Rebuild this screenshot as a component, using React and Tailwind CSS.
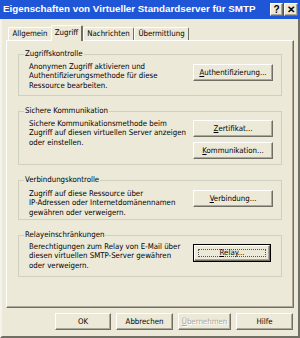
const btn =
  'flex items-center justify-center whitespace-nowrap bg-[#ece9d8] border border-t-white border-l-white border-r-[#716f64] border-b-[#716f64] shadow-[inset_-1px_-1px_#aca899]';

function Button({ children, className = '', isDefault = false, disabled = false }) {
  if (isDefault) {
    return (
      <div className={`shrink-0 border border-black ${className}`}>
        <div className={`${btn} w-full h-full`}>
          <div className="w-[calc(100%-6px)] h-[calc(100%-6px)] border border-dotted border-[#555] flex items-center justify-center">
            {children}
          </div>
        </div>
      </div>
    );
  }
  return (
    <div className={`${btn} shrink-0 ${className} ${disabled ? 'text-[#aca899] [text-shadow:1px_1px_white]' : ''}`}>
      {children}
    </div>
  );
}

function Group({ title, children, className = '' }) {
  return (
    <fieldset className={`border border-[#d0d0bf] px-0 ${className}`}>
      <legend className="ml-[5px] px-[1px] leading-[10px]">{title}</legend>
      {children}
    </fieldset>
  );
}

function Tab({ label, active = false, className = '' }) {
  return active ? (
    <div className={`relative z-10 -mb-px h-[16px] pt-[1px] text-center whitespace-nowrap bg-[#ece9d8] border-t border-l border-white border-r-2 border-r-[#716f64] rounded-t-[2px] ${className}`}>
      {label}
    </div>
  ) : (
    <div className={`mt-[2px] h-[13px] text-center whitespace-nowrap bg-[#ece9d8] border-t border-l border-white border-r border-r-[#716f64] rounded-t-[2px] ${className}`}>
      {label}
    </div>
  );
}

export default function App() {
  return (
    <div
      className="w-[300px] h-[338px] bg-[#ece9d8] text-black text-[7.8px] flex flex-col border-l-2 border-l-[#f4f3ee] border-r-2 border-r-[#716f64] border-b-2 border-b-[#716f64]"
      style={{ fontFamily: '"DejaVu Sans Condensed", "DejaVu Sans", sans-serif' }}
    >
      <div className="h-[19px] -ml-[2px] -mr-[2px] bg-[#1f56d8] flex items-center pl-[3px] pr-[2px]">
        <span className="text-white font-bold text-[9.8px] flex-1 whitespace-nowrap font-['Liberation_Sans',Arial,sans-serif]">
          Eigenschaften von Virtueller Standardserver für SMTP
        </span>
        <div className={`${btn} w-[13px] h-[13px] font-bold text-[10px] font-['Liberation_Sans',Arial,sans-serif]`}>?</div>
        <div className={`${btn} w-[14px] h-[13px] ml-[1px] font-bold text-[10px] font-['Liberation_Sans',Arial,sans-serif]`}>✕</div>
      </div>

      <div className="flex items-end pl-[6px] mt-[6px] h-[15px] text-[7.8px]">
        <Tab label="Allgemein" className="w-[44px]" />
        <Tab label="Zugriff" active className="w-[32px] -ml-[1px]" />
        <Tab label="Nachrichten" className="w-[51px]" />
        <Tab label="Übermittlung" className="w-[55px]" />
      </div>

      <div className="ml-[4px] w-[288px] h-[268px] border border-t-white border-l-white border-r-[#716f64] border-b-[#716f64] shadow-[inset_-1px_-1px_#aca899] px-[11px] pt-[8px] flex flex-col gap-[10px]">
        <Group title="Zugriffskontrolle" className="h-[47px]">
          <div className="flex justify-between pl-[10px] pr-[8px] leading-[9.3px]">
            <p className="mt-[3px] whitespace-nowrap">
              Anonymen Zugriff aktivieren und
              <br />
              Authentifizierungsmethode für diese
              <br />
              Ressource bearbeiten.
            </p>
            <Button className="w-[80px] h-[17px] mt-[5px]">
              <span><u>A</u>uthentifizierung...</span>
            </Button>
          </div>
        </Group>

        <Group title="Sichere Kommunikation" className="h-[59px]">
          <div className="flex justify-between pl-[10px] pr-[8px] leading-[9.3px]">
            <p className="mt-[3px] whitespace-nowrap">
              Sichere Kommunikationsmethode beim
              <br />
              Zugriff auf diesen virtuellen Server anzeigen
              <br />
              oder einstellen.
            </p>
            <div className="flex flex-col gap-[5px] mt-[4px] shrink-0">
              <Button className="w-[80px] h-[17px]">
                <span><u>Z</u>ertifikat...</span>
              </Button>
              <Button className="w-[80px] h-[17px]">
                <span><u>K</u>ommunikation...</span>
              </Button>
            </div>
          </div>
        </Group>

        <Group title="Verbindungskontrolle" className="h-[45px]">
          <div className="flex justify-between pl-[10px] pr-[8px] leading-[9.3px]">
            <p className="mt-[4px] whitespace-nowrap">
              Zugriff auf diese Ressource über
              <br />
              IP-Adressen oder Internetdomänennamen
              <br />
              gewähren oder verweigern.
            </p>
            <Button className="w-[80px] h-[17px] mt-[5px]">
              <span><u>V</u>erbindung...</span>
            </Button>
          </div>
        </Group>

        <Group title="Relayeinschränkungen" className="h-[47px]">
          <div className="flex justify-between pl-[10px] pr-[10px] leading-[9.3px]">
            <p className="mt-[2px] whitespace-nowrap">
              Berechtigungen zum Relay von E-Mail über
              <br />
              diesen virtuellen SMTP-Server gewähren
              <br />
              oder verweigern.
            </p>
            <Button isDefault className="w-[78px] h-[18px] mt-[4px]">
              <span><u>R</u>elay...</span>
            </Button>
          </div>
        </Group>
      </div>

      <div className="flex justify-end gap-[5px] pr-[5px] mt-[5px]">
        <Button className="w-[56px] h-[17px]">OK</Button>
        <Button className="w-[57px] h-[17px]">Abbrechen</Button>
        <Button disabled className="w-[53px] h-[17px]">
          <span><u>Ü</u>bernehmen</span>
        </Button>
        <Button className="w-[57px] h-[17px]">Hilfe</Button>
      </div>
    </div>
  );
}
